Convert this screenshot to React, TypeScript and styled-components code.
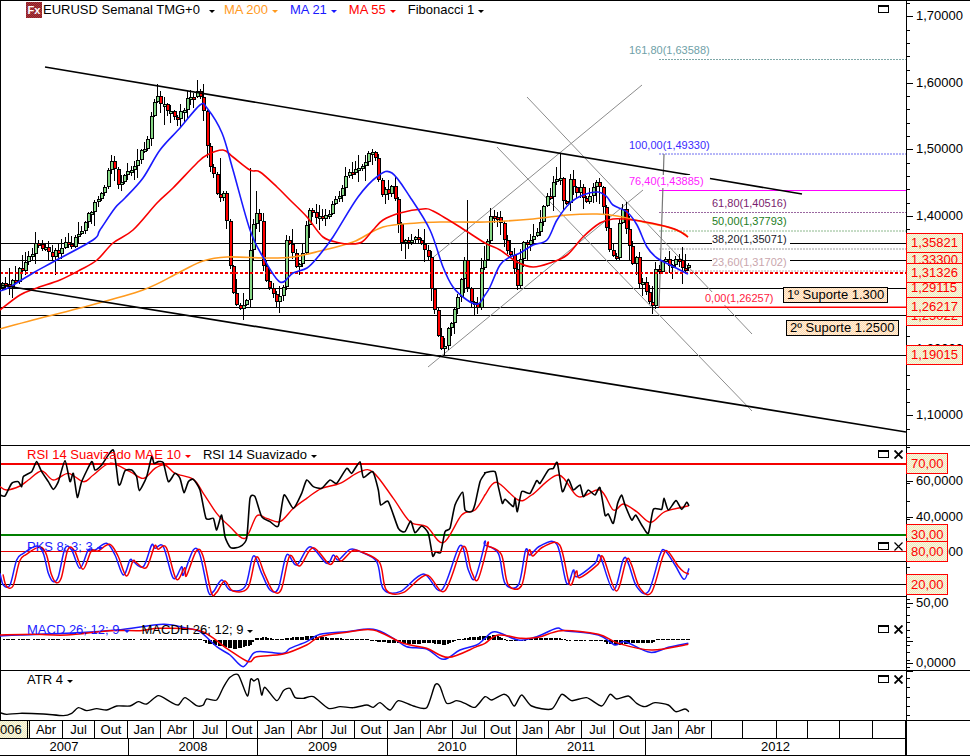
import React from 'react';
import styled, {createGlobalStyle} from 'styled-components';

type Pt = number[];

// zoomed traces were read at 3x, this brings them back to page pixels
const z = (pts: Pt[], ox = 0, oy = 0): Pt[] => pts.map(([x, y]) => [ox + x / 3, oy + y / 3]);

const smooth = (pts: Pt[], k = 6) => {
	let d = `M${pts[0][0]} ${pts[0][1]}`;
	for (let i = 0; i < pts.length - 1; i++) {
		const a = pts[Math.max(i - 1, 0)];
		const b = pts[i];
		const c = pts[i + 1];
		const e = pts[Math.min(i + 2, pts.length - 1)];
		d += ` C${b[0] + (c[0] - a[0]) / k} ${b[1] + (c[1] - a[1]) / k} ${c[0] - (e[0] - b[0]) / k} ${c[1] - (e[1] - b[1]) / k} ${c[0]} ${c[1]}`;
	}
	return d;
};

const interp = (pts: Pt[], x: number) => {
	for (let i = 0; i < pts.length - 1; i++) {
		if (x >= pts[i][0] && x <= pts[i + 1][0]) {
			const t = (x - pts[i][0]) / (pts[i + 1][0] - pts[i][0] || 1);
			return pts[i][1] + (pts[i + 1][1] - pts[i][1]) * t;
		}
	}
	return pts[pts.length - 1][1];
};

const CLOSES: Pt[] = [
	[0, 288], [10, 283], [15, 277], [25, 263], [37, 240], [50, 257], [60, 248], [75, 240], [88, 210], [100, 197], [110, 163], [118, 183], [125, 168], [135, 165], [147, 137], [152, 107], [157, 97], [170, 115], [178, 115], [187, 100], [197, 88], [203, 120], [208, 165], [213, 175], [218, 200], [224, 195], [226, 240], [233, 305], [240, 305], [247, 295], [250, 230], [254, 213], [258, 225], [263, 273], [268, 290], [277, 303], [283, 285], [285, 243], [292, 255], [297, 270], [303, 243], [307, 210], [315, 220], [325, 215], [335, 200], [347, 173], [363, 160], [373, 153], [378, 190], [382, 192], [392, 190], [395, 210], [400, 240], [415, 240], [420, 248], [427, 260], [430, 290], [435, 323], [441, 352], [447, 325], [452, 315], [460, 280], [463, 263], [468, 303], [476, 305], [480, 270], [485, 250], [490, 212], [497, 215], [503, 237], [510, 262], [517, 287], [520, 247], [533, 237], [543, 207], [553, 183], [558, 162], [560, 197], [567, 203], [570, 173], [575, 197], [580, 180], [583, 207], [590, 190], [598, 183], [603, 210], [608, 247], [615, 257], [617, 223], [622, 207], [628, 247], [632, 265], [637, 257], [638, 280], [647, 297], [652, 303], [653, 273], [660, 267], [663, 253], [668, 268], [677, 258], [682, 273], [688, 267]
];

const LONG_WICKS: Pt[] = [[250, 168], [255, 191], [220, 158], [558, 154], [465, 200], [197, 80], [157, 84]];

const buildCandles = () => {
	let seed = 1207;
	const rand = () => {
		seed = (seed * 16807) % 2147483647;
		return seed / 2147483647;
	};
	const out = [];
	let prev = 288;
	for (let i = 0; i < 209; i++) {
		const x = Math.round(1 + i * 3.3);
		const close = interp(CLOSES, x) + (rand() - 0.5) * 9;
		const top = Math.round(Math.min(prev, close));
		const bottom = Math.max(Math.round(Math.max(prev, close)), top + 3);
		let high = top - 1 - rand() * rand() * 16;
		const low = bottom + 1 + rand() * rand() * 18;
		const wick = LONG_WICKS.find((w) => Math.abs(w[0] - x) < 2);
		if (wick) high = Math.min(high, wick[1]);
		out.push({x, top, bottom, high, low, up: close < prev});
		prev = close;
	}
	return out;
};

const CANDLES = buildCandles();

const MA21: Pt[] = [[0, 291], [10, 287], [33, 273], [53, 262], [93, 240], [100, 230], [115, 208], [125, 198], [143, 178], [160, 150], [180, 128], [200, 105], [207, 108], [222, 133], [233, 170], [250, 230], [263, 257], [280, 282], [293, 273], [307, 268], [317, 258], [333, 237], [358, 197], [378, 176], [392, 173], [410, 197], [430, 230], [443, 267], [453, 287], [467, 300], [478, 304], [485, 295], [490, 287], [500, 265], [510, 257], [520, 253], [533, 245], [547, 240], [557, 220], [570, 203], [583, 195], [598, 192], [607, 197], [613, 205], [627, 212], [637, 225], [647, 247], [657, 258], [670, 265], [688, 274]];
const MA55: Pt[] = [[0, 310], [20, 295], [37, 288], [60, 280], [80, 270], [97, 260], [113, 243], [133, 230], [157, 203], [173, 188], [197, 163], [207, 155], [223, 150], [233, 157], [250, 170], [260, 172], [277, 187], [290, 200], [307, 217], [323, 237], [340, 243], [350, 244], [362, 242], [373, 230], [383, 220], [400, 213], [423, 209], [433, 211], [460, 227], [485, 243], [500, 250], [517, 262], [533, 267], [550, 263], [567, 255], [583, 237], [600, 223], [613, 219], [633, 220], [660, 225], [677, 230], [688, 237]];
const MA200: Pt[] = [[0, 329], [33, 320], [80, 308], [143, 290], [180, 272], [203, 261], [227, 257], [267, 258], [293, 257], [320, 251], [353, 242], [383, 227], [417, 223], [443, 222], [485, 222], [533, 219], [567, 215], [597, 214], [617, 216], [643, 222], [667, 227], [683, 233], [688, 237]];

const RSI: Pt[] = [
	...z([[0, 165], [15, 168], [35, 130], [55, 125], [65, 140], [70, 110], [95, 95], [110, 65], [125, 95], [145, 125], [160, 148], [175, 125], [195, 62], [210, 125], [220, 100], [232, 172], [245, 125], [275, 65], [285, 90], [305, 75], [340, 30], [355, 130], [362, 130], [375, 92], [395, 90], [410, 110], [418, 152], [440, 110], [455, 50], [462, 70], [475, 65], [490, 68], [505, 125], [525, 100], [540, 115], [552, 158], [565, 125], [580, 118], [600, 150], [618, 235], [640, 235], [650, 270], [665, 225], [675, 290], [692, 323], [720, 320], [740, 295], [750, 175], [765, 170], [785, 230], [810, 245], [835, 258], [852, 165], [880, 205], [905, 160], [920, 120], [940, 140], [965, 145], [990, 120], [1010, 130], [1040, 85], [1055, 100], [1080, 65], [1090, 112], [1118, 95], [1135, 150], [1142, 195], [1165, 185], [1195, 265], [1215, 275], [1232, 243], [1245, 278], [1265, 258], [1285, 280], [1298, 348], [1307, 335], [1322, 337], [1335, 275], [1350, 265], [1365, 195], [1388, 157], [1395, 210], [1415, 215], [1425, 193], [1440, 125], [1455, 100]], 0, 440),
	...z([[0, 98], [30, 95], [40, 140], [52, 190], [60, 178], [85, 200], [90, 175], [97, 215], [110, 155], [135, 160], [155, 122], [165, 130], [190, 90], [205, 85], [217, 68], [232, 155], [250, 118], [265, 150], [285, 135], [295, 170], [310, 150], [330, 165], [345, 143], [360, 225], [370, 222], [385, 250], [398, 190], [410, 165], [420, 195], [440, 240], [452, 225], [470, 255], [490, 280], [505, 208], [530, 208], [537, 175], [550, 210], [573, 182], [590, 208], [605, 187], [612, 198]], 485, 440)
];
const RSI_MAE: Pt[] = [
	...z([[0, 140], [20, 150], [60, 138], [85, 120], [125, 93], [160, 120], [205, 100], [250, 125], [280, 105], [330, 70], [390, 95], [430, 115], [465, 85], [495, 75], [525, 100], [580, 118], [610, 160], [650, 220], [690, 260], [735, 295], [770, 228], [800, 235], [840, 245], [880, 205], [920, 175], [965, 145], [1020, 130], [1080, 95], [1120, 97], [1180, 175], [1230, 245], [1280, 260], [1330, 308], [1385, 225], [1425, 210], [1455, 165]], 0, 440),
	...z([[0, 165], [35, 127], [100, 180], [140, 165], [220, 105], [280, 170], [345, 150], [385, 210], [415, 192], [455, 215], [497, 247], [540, 215], [610, 198]], 485, 440)
];

const PKS_BLUE: Pt[] = [
	...z([[0, 400], [10, 435], [30, 435], [50, 360], [70, 340], [110, 318], [130, 340], [145, 400], [160, 425], [175, 410], [195, 325], [215, 330], [240, 385], [265, 330], [285, 330], [320, 310], [345, 345], [370, 405], [390, 360], [400, 365], [430, 380], [455, 315], [465, 325], [490, 320], [520, 415], [545, 380], [550, 405], [580, 330], [600, 345], [625, 455], [640, 455], [665, 420], [690, 450], [735, 440], [760, 348], [785, 400], [810, 450], [835, 445], [860, 345], [890, 375], [930, 320], [980, 370], [1000, 345], [1015, 360], [1050, 328], [1080, 335], [1130, 365], [1150, 447], [1200, 455], [1270, 402], [1325, 450], [1380, 317], [1405, 390], [1425, 415], [1455, 310]], 0, 440),
	...z([[0, 315], [40, 340], [60, 430], [100, 435], [122, 330], [135, 345], [165, 318], [215, 312], [245, 430], [265, 390], [275, 410], [330, 370], [345, 348], [385, 450], [415, 358], [430, 370], [455, 440], [490, 455], [525, 345], [540, 332], [570, 375], [597, 418], [612, 385]], 485, 440)
];
const PKS_RED: Pt[] = [...PKS_BLUE.slice(0, -2).map(([x, y]) => [x + 3, y + 1]), [684, 572], [689, 574]];

const MACD_BLUE: Pt[] = [
	...z([[0, 108], [60, 105], [200, 100], [350, 90], [490, 73], [560, 85], [600, 95], [650, 140], [690, 165], [730, 200], [760, 160], [790, 155], [850, 160], [870, 145], [920, 125], [960, 103], [1040, 95], [1120, 88], [1180, 115], [1220, 140], [1280, 147], [1330, 178], [1380, 150], [1430, 135]], 0, 600),
	...z([[0, 115], [30, 95], [100, 120], [150, 112], [215, 85], [240, 92], [340, 105], [390, 135], [420, 125], [495, 157], [550, 142], [610, 130]], 485, 600)
];
const MACD_RED: Pt[] = [
	...z([[0, 105], [100, 103], [200, 105], [330, 92], [420, 92], [480, 85], [600, 92], [680, 145], [745, 185], [770, 170], [850, 162], [920, 135], [960, 110], [1040, 97], [1120, 90], [1210, 130], [1280, 145], [1345, 172], [1430, 140]], 0, 600),
	...z([[0, 130], [40, 105], [110, 115], [160, 112], [230, 92], [340, 103], [400, 130], [500, 150], [610, 133]], 485, 600)
];
const MACD_HIST: Pt[] = [[0, 0], [200, 0.5], [205, -3], [220, -6], [235, -9], [250, -5], [255, 2], [265, 3], [275, 0], [285, 2], [310, 4], [330, 2], [365, 0.5], [378, -2], [410, -4], [430, -3], [445, -5], [455, 0], [470, 3], [485, 4], [495, 5], [505, 0], [510, -1], [518, -1], [525, 0], [535, 2], [560, 2], [565, 0], [600, -0.5], [607, -4], [618, -5], [630, -3], [652, -3], [656, 1], [690, 1]];

const ATR: Pt[] = [
	...z([[0, 338], [20, 343], [60, 340], [130, 342], [190, 347], [215, 340], [235, 323], [260, 332], [290, 326], [320, 330], [350, 318], [390, 318], [415, 305], [440, 312], [475, 287], [510, 305], [535, 315], [555, 293], [590, 317], [610, 315], [620, 297], [650, 300], [670, 262], [690, 232], [715, 225], [742, 288], [752, 238], [762, 243], [775, 238], [785, 285], [795, 262], [830, 302], [850, 272], [870, 265], [885, 292], [910, 295], [940, 290], [985, 325], [1020, 320], [1060, 323], [1100, 315], [1120, 322], [1140, 308], [1170, 330], [1195, 302], [1240, 318], [1280, 323], [1305, 255], [1320, 260], [1340, 310], [1370, 302], [1395, 310], [1425, 322]], 0, 600),
	...z([[0, 290], [20, 300], [55, 283], [70, 290], [88, 318], [110, 285], [140, 318], [200, 327], [230, 283], [260, 302], [305, 293], [350, 318], [375, 283], [395, 297], [430, 288], [455, 310], [480, 320], [510, 308], [550, 315], [572, 335], [600, 327], [612, 335]], 485, 600)
];

const FIB_LEVELS = [
	{y: 59.5, color: '#7fa8a8', dash: '2 1'},
	{y: 154, color: '#6c6cf0', dash: '2 1'},
	{y: 190.5, color: '#ff00ff'},
	{y: 212.5, color: '#9a68a0', dash: '2 1'},
	{y: 231, color: '#8cb88c', dash: '2 1'},
	{y: 249, color: '#a0a0a0', dash: '2 1'},
	{y: 271, color: '#c4b0b0', dash: '2 1'}
];

const FIB_LABELS = [
	{text: '161,80(1,63588)', x: 629, y: 50, color: '#6f9fa8'},
	{text: '100,00(1,49330)', x: 629, y: 145, color: '#3a2cff'},
	{text: '76,40(1,43885)', x: 629, y: 181, color: '#ff22ff'},
	{text: '61,80(1,40516)', x: 712, y: 203, color: '#7a1c6e'},
	{text: '50,00(1,37793)', x: 712, y: 221, color: '#1d7d1d'},
	{text: '38,20(1,35071)', x: 712, y: 239, color: '#1a1a2a'},
	{text: '23,60(1,31702)', x: 712, y: 262, color: '#c9a6ad'},
	{text: '0,00(1,26257)', x: 705, y: 298, color: '#ff2040'}
];

const MONTHS: [string, number][] = [
	['Abr', 33], ['Jul', 32], ['Out', 33], ['Jan', 33], ['Abr', 33], ['Jul', 33], ['Out', 31], ['Jan', 34], ['Abr', 31], ['Jul', 32], ['Out', 33], ['Jan', 33], ['Abr', 32], ['Jul', 32], ['Out', 32], ['Jan', 32], ['Abr', 33], ['Jul', 32], ['Out', 32], ['Jan', 33], ['Abr', 33],
	['', 31], ['', 34], ['', 31], ['', 32], ['', 33], ['', 33]
];

const YEARS: [string, number][] = [['2007', 129], ['2008', 129], ['2009', 130], ['2010', 129], ['2011', 129], ['2012', 260]];

const makeTicks = (from: number, to: number, step: number, major: number[]) => {
	const out: {y: number; big: boolean}[] = major.map((y) => ({y, big: true}));
	for (let y = from; y <= to; y += step) out.push({y, big: false});
	return out;
};

function LegendItem({children, color}: {children: React.ReactNode; color: string}) {
	return (
		<LegendEntry $color={color}>
			{children}
			<Arrow $color={color} />
		</LegendEntry>
	);
}

function PaneButtons({close, thin}: {close?: boolean; thin?: boolean}) {
	return (
		<Controls>
			<MaximizeBox />
			{close && (
				<svg width="9" height="9" viewBox="0 0 9 9">
					<path d="M0.5 0.5 8.5 8.5M8.5 0.5 0.5 8.5" stroke="#000" strokeWidth={thin ? 1.2 : 1.9} fill="none" />
				</svg>
			)}
		</Controls>
	);
}

interface PaneProps {
	top: number;
	height: number;
	ruled?: boolean;
	ticks: {y: number; big: boolean}[];
	labels: [string, number][];
	tags?: {text: string; y: number; h?: number}[];
	tagWidth?: number;
	legend: React.ReactNode;
	buttons: React.ReactNode;
	children?: React.ReactNode;
	overlay?: (origin: number) => React.ReactNode;
}

function ChartPane({top, height, ruled, ticks, labels, tags, tagWidth, legend, buttons, children, overlay}: PaneProps) {
	const origin = ruled ? top + 1 : top;
	const inner = ruled ? height - 1 : height;
	return (
		<Pane $height={height} $ruled={ruled}>
			<Plot>
				<Canvas width="905" height={inner} viewBox={`1 ${origin} 905 ${inner}`}>
					{children}
				</Canvas>
				{overlay && overlay(origin)}
				<Legend>{legend}</Legend>
				{buttons}
			</Plot>
			<Axis>
				<Canvas width="12" height={inner} viewBox={`0 ${origin} 12 ${inner}`}>
					{ticks.map((t, i) => (
						<rect key={i} x="0" y={Math.round(t.y)} width={t.big ? 6 : 3} height="1" fill="#000" />
					))}
				</Canvas>
				{labels.map(([text, y]) => (
					<AxisLabel key={text} $y={y - origin - 8}>
						{text}
					</AxisLabel>
				))}
				{tags &&
					tags.map((t) => (
						<PriceTag key={t.text} $y={t.y - origin} $w={tagWidth || 57} $h={t.h || 20}>
							{t.text}
						</PriceTag>
					))}
			</Axis>
		</Pane>
	);
}

const hLine = (y: number, color = '#000', from = 1, to = 906) => (
	<rect key={`${y}-${color}`} x={from} y={y} width={to - from} height="1" fill={color} />
);

function PriceChart() {
	return (
		<ChartPane
			top={0}
			height={445}
			ruled
			ticks={makeTicks(3, 440, 13.3, [16, 83, 149, 216, 282, 349, 415])}
			labels={[['1,70000', 16], ['1,60000', 83], ['1,50000', 149], ['1,40000', 216], ['1,30000', 282], ['1,20000', 349], ['1,10000', 415]]}
			tags={[
				{text: '1,33300', y: 250},
				{text: '1,29115', y: 278},
				{text: '1,25022', y: 306},
				{text: '1,35821', y: 233},
				{text: '1,31326', y: 263},
				{text: '1,26217', y: 297},
				{text: '1,19015', y: 345}
			]}
			legend={
				<>
					<FxIcon>Fx</FxIcon>
					<LegendTitle>
						<LegendItem color="#000">EURUSD Semanal TMG+0</LegendItem>
					</LegendTitle>
					<LegendItem color="#ff9a1e">MA 200</LegendItem>
					<LegendItem color="#1a1aff">MA 21</LegendItem>
					<LegendItem color="#ff0000">MA 55</LegendItem>
					<LegendItem color="#000">Fibonacci 1</LegendItem>
				</>
			}
			buttons={<PaneButtons />}
			overlay={(origin) => (
				<>
					{FIB_LABELS.map((l) => (
						<FibLabel key={l.text} $x={l.x - 1} $y={l.y - origin - 6} $color={l.color}>
							{l.text}
						</FibLabel>
					))}
					<NoteBox $x={782} $y={287 - origin}>1º Suporte 1.300</NoteBox>
					<NoteBox $x={785} $y={320 - origin}>2º Suporte 1.2500</NoteBox>
				</>
			)}>
			<defs>
				<pattern id="red-dots" width="5" height="2" patternUnits="userSpaceOnUse">
					<rect width="3" height="2" fill="#f00000" />
				</pattern>
			</defs>
			{[243, 260, 288, 307, 315, 355].map((y) => hLine(y))}
			<g stroke="#8c8c8c" strokeWidth="1" fill="none">
				<line x1="430" y1="260" x2="642" y2="85" />
				<line x1="428" y1="367" x2="643" y2="190" />
				<line x1="527" y1="97" x2="752" y2="334" />
				<line x1="497" y1="147" x2="752" y2="411" />
			</g>
			{FIB_LEVELS.map((f) => (
				<line key={f.y} x1="659" y1={f.y} x2="906" y2={f.y} stroke={f.color} strokeDasharray={f.dash} />
			))}
			<line x1="664" y1="154" x2="659" y2="307" stroke="#777" strokeWidth="1.2" />
			<rect x="659" y="306.5" width="247" height="1.5" fill="#ff0000" />
			<g shapeRendering="crispEdges">
				{CANDLES.map((c) => (
					<g key={c.x}>
						<rect x={c.x + 1} y={c.high} width="1" height={c.low - c.high} fill="#000" />
						<rect x={c.x} y={c.top} width="4" height={c.bottom - c.top} fill="#000" />
						<rect x={c.x + 1} y={c.top + 1} width="2" height={c.bottom - c.top - 2} fill={c.up ? '#86d886' : '#ff0000'} />
					</g>
				))}
			</g>
			<rect x="1" y="272" width="905" height="2" fill="url(#red-dots)" />
			<g fill="none" strokeWidth="1.6" strokeLinejoin="round">
				<path d={smooth(MA200)} stroke="#ff9a1e" />
				<path d={smooth(MA55)} stroke="#f80000" />
				<path d={smooth(MA21)} stroke="#1a1aff" />
			</g>
			<g stroke="#000" strokeWidth="1.7">
				<line x1="45" y1="67" x2="690" y2="175" />
				<line x1="710" y1="178.5" x2="802" y2="194" />
				<line x1="0" y1="285" x2="906" y2="432" />
			</g>
		</ChartPane>
	);
}

function RsiChart() {
	return (
		<ChartPane
			top={445}
			height={93}
			ruled
			ticks={makeTicks(447, 537, 18, [481, 517])}
			labels={[['60,0000', 481], ['40,0000', 517]]}
			tagWidth={42}
			tags={[{text: '70,00', y: 453, h: 21}, {text: '30,00', y: 524, h: 21}]}
			legend={
				<>
					<LegendItem color="#ff0000">RSI 14 Suavizado MAE 10</LegendItem>
					<LegendItem color="#000">RSI 14 Suavizado</LegendItem>
				</>
			}
			buttons={<PaneButtons close />}>
			<rect x="1" y="463" width="905" height="2" fill="#f40000" />
			<rect x="1" y="534" width="905" height="2" fill="#007f00" />
			<path d={smooth(RSI_MAE)} fill="none" stroke="#f40000" strokeWidth="1.4" />
			<path d={smooth(RSI, 10)} fill="none" stroke="#000" strokeWidth="1.6" strokeLinejoin="round" />
		</ChartPane>
	);
}

function StochasticChart() {
	return (
		<ChartPane
			top={538}
			height={83}
			ticks={makeTicks(567, 620, 8, [603])}
			labels={[['20,0000', 552], ['50,00', 603]]}
			tagWidth={42}
			tags={[{text: '80,00', y: 541, h: 21}, {text: '20,00', y: 574, h: 21}]}
			legend={<LegendItem color="#1a1aff">PKS 8; 3; 3</LegendItem>}
			buttons={<PaneButtons close thin />}>
			{hLine(551, '#e00000')}
			{hLine(561)}
			{hLine(584)}
			{hLine(596)}
			<path d={smooth(PKS_BLUE)} fill="none" stroke="#1a1aff" strokeWidth="1.5" />
			<path d={smooth(PKS_RED)} fill="none" stroke="#f40000" strokeWidth="1.5" />
		</ChartPane>
	);
}

function MacdChart() {
	const bars = [];
	for (let x = 1; x < 690; x += 2.49) {
		const v = interp(MACD_HIST, x);
		if (Math.abs(v) < 0.4 && Math.floor(x / 3) % 5 === 0) continue;
		const h = Math.max(Math.abs(v), 1);
		bars.push(<rect key={x} x={Math.round(x)} y={v > 0 ? 640 - h : 640} width="2" height={Math.round(h)} />);
	}
	return (
		<ChartPane
			top={621}
			height={49}
			ticks={makeTicks(622, 669, 7.5, [641, 663])}
			labels={[['0,0000', 663]]}
			legend={
				<>
					<LegendItem color="#1a1aff">MACD 26; 12; 9</LegendItem>
					<LegendItem color="#000">MACDH 26; 12; 9</LegendItem>
				</>
			}
			buttons={<PaneButtons close />}>
			<g fill="#000" shapeRendering="crispEdges">
				{bars}
			</g>
			<path d={smooth(MACD_BLUE)} fill="none" stroke="#1a1aff" strokeWidth="1.5" />
			<path d={smooth(MACD_RED)} fill="none" stroke="#f40000" strokeWidth="1.5" />
		</ChartPane>
	);
}

function AtrChart() {
	return (
		<ChartPane
			top={670}
			height={50}
			ruled
			ticks={[...makeTicks(678, 716, 9.3, []), {y: 671, big: true}]}
			labels={[]}
			legend={<LegendItem color="#000">ATR 4</LegendItem>}
			buttons={<PaneButtons close />}>
			<path d={smooth(ATR, 8)} fill="none" stroke="#000" strokeWidth="1.4" />
		</ChartPane>
	);
}

function TimeAxis() {
	return (
		<TimeRow>
			<TimeScale>
				<MonthRow>
					<FirstCell>006</FirstCell>
					{MONTHS.map(([label, w], i) => (
						<MonthCell key={i} $w={w}>
							{label}
						</MonthCell>
					))}
				</MonthRow>
				<YearRow>
					{YEARS.map(([label, w]) => (
						<YearCell key={label} $w={w}>
							{label}
						</YearCell>
					))}
				</YearRow>
			</TimeScale>
			<TimeCorner />
		</TimeRow>
	);
}

export default function App() {
	return (
		<Screen>
			<GlobalStyle />
			<PriceChart />
			<RsiChart />
			<StochasticChart />
			<MacdChart />
			<AtrChart />
			<TimeAxis />
		</Screen>
	);
}

const GlobalStyle = createGlobalStyle`
	html,
	body {
		margin: 0;
		background: #fff;
	}
`;

const Screen = styled.div`
	width: 970px;
	height: 756px;
	overflow: hidden;
	background: #fff;
	font-family: 'Liberation Sans', Arial, sans-serif;
	font-size: 13px;
	color: #000;
`;

const Pane = styled.div<{$height: number; $ruled?: boolean}>`
	display: grid;
	grid-template-columns: 906px 64px;
	height: ${(p) => p.$height}px;
	box-sizing: border-box;
	border-top: ${(p) => (p.$ruled ? '1px solid #000' : 'none')};
`;

const Plot = styled.div`
	position: relative;
	border-left: 1px solid #000;
`;

const Canvas = styled.svg`
	display: block;
	overflow: visible;
`;

const Axis = styled.div`
	position: relative;
	border-left: 1px solid #000;
`;

const Legend = styled.div`
	position: absolute;
	top: 2px;
	left: 26px;
	display: flex;
	align-items: center;
	gap: 12px;
	height: 14px;
	white-space: nowrap;
	line-height: 14px;
`;

const LegendEntry = styled.span<{$color: string}>`
	display: flex;
	align-items: center;
	gap: 4px;
	color: ${(p) => p.$color};
`;

const LegendTitle = styled.span`
	display: flex;
	margin: 0 -3px 0 -12px;
	${LegendEntry} {
		gap: 9px;
	}
`;

const Arrow = styled.i<{$color: string}>`
	display: block;
	width: 0;
	height: 0;
	margin-top: 2px;
	border-left: 3px solid transparent;
	border-right: 3px solid transparent;
	border-top: 3px solid ${(p) => p.$color};
`;

const FxIcon = styled.span`
	display: block;
	width: 16px;
	height: 16px;
	margin: 0 1px 0 -1px;
	background: repeating-conic-gradient(#8e1c24 0 25%, #a83a3e 0 50%) 0 0 / 2px 2px;
	color: #fff;
	font-size: 11px;
	font-weight: bold;
	line-height: 16px;
	text-align: center;
`;

const Controls = styled.div`
	position: absolute;
	top: 4px;
	left: 877px;
	display: flex;
	align-items: flex-start;
	gap: 5px;
	width: 25px;
`;

const MaximizeBox = styled.span`
	display: block;
	box-sizing: border-box;
	width: 11px;
	height: 8px;
	background: #fff;
	border: 1px solid #000;
	border-top-width: 2px;
`;

const AxisLabel = styled.span<{$y: number}>`
	position: absolute;
	top: ${(p) => p.$y}px;
	left: 9px;
	line-height: 16px;
	white-space: nowrap;
`;

const PriceTag = styled.span<{$y: number; $w: number; $h: number}>`
	position: absolute;
	top: ${(p) => p.$y}px;
	left: -1px;
	box-sizing: border-box;
	width: ${(p) => p.$w}px;
	height: ${(p) => p.$h}px;
	padding-left: 4px;
	border: 1px solid #ff0000;
	background: repeating-conic-gradient(#fffbd6 0 25%, #e6e4c8 0 50%) 0 0 / 2px 2px;
	color: #ff0000;
	line-height: ${(p) => p.$h - 2}px;
	white-space: nowrap;
`;

const FibLabel = styled.span<{$x: number; $y: number; $color: string}>`
	position: absolute;
	top: ${(p) => p.$y}px;
	left: ${(p) => p.$x}px;
	padding-right: 3px;
	background: #fff;
	color: ${(p) => p.$color};
	font-size: 11px;
	line-height: 13px;
	white-space: nowrap;
`;

const NoteBox = styled.span<{$x: number; $y: number}>`
	position: absolute;
	top: ${(p) => p.$y}px;
	left: ${(p) => p.$x}px;
	padding: 0 3px;
	border: 1px solid #000;
	background: repeating-conic-gradient(#ffd9ae 0 25%, #ffeeda 0 50%) 0 0 / 2px 2px;
	line-height: 14px;
	white-space: nowrap;
`;

const TimeRow = styled.div`
	display: grid;
	grid-template-columns: 906px 64px;
	height: 36px;
	box-sizing: border-box;
	border-top: 1px solid #000;
	border-bottom: 1px solid #000;
`;

const TimeScale = styled.div`
	display: flex;
	flex-direction: column;
`;

const MonthRow = styled.div`
	display: flex;
	height: 18px;
	box-sizing: border-box;
	border-bottom: 1px solid #000;
`;

const FirstCell = styled.span`
	box-sizing: border-box;
	width: 30px;
	padding-right: 10px;
	border-right: 3px double #000;
	background: repeating-conic-gradient(#fffbd6 0 25%, #e6e4c8 0 50%) 0 0 / 2px 2px;
	line-height: 17px;
`;

const MonthCell = styled.span<{$w: number}>`
	box-sizing: border-box;
	width: ${(p) => p.$w}px;
	border-right: 1px solid #000;
	line-height: 17px;
	text-align: center;
`;

const YearRow = styled.div`
	display: flex;
	flex: 1;
`;

const YearCell = styled.span<{$w: number}>`
	box-sizing: border-box;
	width: ${(p) => p.$w}px;
	border-right: 1px solid #000;
	line-height: 16px;
	text-align: center;
`;

const TimeCorner = styled.div`
	border-left: 1px solid #000;
`;
